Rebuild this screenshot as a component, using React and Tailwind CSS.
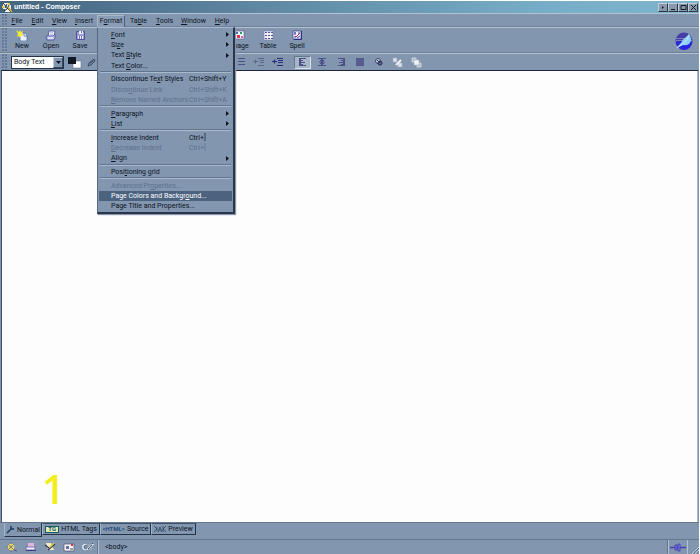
import React from 'react';

const MENUS = [
  { label: 'File', key: 0, width: 'w-[20px]' },
  { label: 'Edit', key: 0, width: 'w-[21px]' },
  { label: 'View', key: 0, width: 'w-[23px]' },
  { label: 'Insert', key: 0, width: 'w-[26px]' },
  { label: 'Format', key: 1, width: 'w-[28px]', open: true },
  { label: 'Table', key: 2, width: 'w-[27px]' },
  { label: 'Tools', key: 0, width: 'w-[25px]' },
  { label: 'Window', key: 0, width: 'w-[33px]' },
  { label: 'Help', key: 0, width: 'w-[24px]' },
];

const FORMAT_ITEMS = [
  { label: 'Font', key: 0, sub: true },
  { label: 'Size', key: 2, sub: true },
  { label: 'Text Style', key: 5, sub: true },
  { label: 'Text Color...', key: 5 },
  null,
  { label: 'Discontinue Text Styles', key: 14, hint: 'Ctrl+Shift+Y' },
  { label: 'Discontinue Link', key: 5, hint: 'Ctrl+Shift+K', off: true },
  { label: 'Remove Named Anchors', key: 0, hint: 'Ctrl+Shift+A', off: true },
  null,
  { label: 'Paragraph', key: 0, sub: true },
  { label: 'List', key: 0, sub: true },
  null,
  { label: 'Increase Indent', key: 0, hint: 'Ctrl+]' },
  { label: 'Decrease Indent', key: 0, hint: 'Ctrl+[', off: true },
  { label: 'Align', key: 0, sub: true },
  null,
  { label: 'Positioning grid', key: 4 },
  null,
  { label: 'Advanced Properties...', key: 11, off: true },
  { label: 'Page Colors and Background...', key: 22, active: true },
  { label: 'Page Title and Properties...' },
];

function Label({ text, at }) {
  if (at === undefined) return <span>{text}</span>;
  return (
    <span>
      {text.slice(0, at)}
      <u className="underline-offset-1">{text[at]}</u>
      {text.slice(at + 1)}
    </span>
  );
}

function Svg({ w, h, className = '', children }) {
  return (
    <svg width={w} height={h} viewBox={`0 0 ${w} ${h}`} className={`block shrink-0 ${className}`} aria-hidden="true">
      {children}
    </svg>
  );
}

function Grip() {
  return (
    <div className="w-[5px] shrink-0 self-stretch bg-[radial-gradient(circle_at_1px_1px,#64789a_0.7px,transparent_1px)] bg-[length:3px_3px]" />
  );
}

function FormatMenu() {
  return (
    <div
      role="menu"
      className="absolute top-full left-0 z-10 flex h-[187px] w-[138px] flex-col justify-between border border-r-2 border-b-2 border-[#26364c] border-t-[#a9b9cb] border-l-[#56697f] bg-[#8296b0] px-px pt-[2px] shadow-[1px_1px_1px_#8a96a6]"
    >
      {FORMAT_ITEMS.map((item, i) =>
        item === null ? (
          <hr key={i} className="mx-px h-[3px] shrink-0 border-0 border-t border-[#61758e] bg-[linear-gradient(#a9bacd_1px,transparent_1px)]" />
        ) : (
          <button
            key={i}
            type="button"
            role="menuitem"
            disabled={item.off}
            className={`grid h-[10px] shrink-0 grid-cols-[78px_1fr] items-center pl-3 text-left leading-[10px] whitespace-nowrap ${
              item.active ? 'bg-[#4c637f] text-white' : item.off ? 'text-[#5d708b]' : 'text-[#0c1422]'
            }`}
          >
            <Label text={item.label} at={item.key} />
            <span className="flex items-center justify-between pr-[3px]">
              <span>{item.hint}</span>
              {item.sub && (
                <Svg w={3} h={5}>
                  <path d="M0 0L3 2.5L0 5Z" fill="#0c1422" />
                </Svg>
              )}
            </span>
          </button>
        ),
      )}
    </div>
  );
}

const AppIcon = () => (
  <Svg w={11} h={11}>
    <path d="M1 1h5v2h3v7H3V7H1z" fill="#edf3f4" />
    <path d="M1 1l8 9M3 6l2-4M7 3l-2 4M2 9l3-2" stroke="#1b2831" />
    <path d="M6 1h2v2H6zM0 4h2v2H0z" fill="#e8c83e" />
    <path d="M6 5l4 5" stroke="#d8ae36" strokeWidth="1.5" />
  </Svg>
);

const NewIcon = () => (
  <Svg w={12} h={11}>
    <path d="M4 3h5l2 2v6H4z" fill="#e9f0ff" stroke="#4c5ca4" strokeWidth=".7" />
    <path d="M8 3v3h3" fill="none" stroke="#4c5ca4" strokeWidth=".7" />
    <path d="M0 0l3 2 1-2 1 2 2-1-1 3 2 1-3 1-1 2-1-2-2 1 1-3z" fill="#f0ed36" />
  </Svg>
);

const OpenIcon = () => (
  <Svg w={12} h={11}>
    <path d="M4 1h6l-1 6H3z" fill="#f1f3ff" stroke="#4b4e9b" strokeWidth=".8" />
    <path d="M5 3h3M5 5h3" stroke="#8b90c8" strokeWidth=".7" />
    <path d="M1 6h7l2-2v4l-1 2H2z" fill="#b9c0ea" stroke="#4b4e9b" strokeWidth=".8" />
    <path d="M3 8h5" stroke="#fff" />
  </Svg>
);

const SaveIcon = () => (
  <Svg w={11} h={11}>
    <path d="M1.5 1.5h8v8h-8z" fill="#9b9bd6" stroke="#55519c" />
    <path d="M4 1h4v3H4zM3 6h5v3H3z" fill="#eef0ff" />
    <path d="M6.5 1v2M4.500 6v3M6.500 6v3" fill="none" stroke="#55519c" strokeWidth=".8" />
  </Svg>
);

const ImageIcon = () => (
  <Svg w={11} h={11}>
    <path d="M1 1h9v8H1z" fill="#fff" stroke="#625993" strokeWidth=".7" />
    <path d="M2 2h2v2H2z" fill="#2f6ac7" />
    <path d="M6 2h2v2H6z" fill="#1aa35d" />
    <path d="M3 5h3v3H3z" fill="#dc3657" />
    <path d="M7 6h2v2H7z" fill="#dd59bb" />
  </Svg>
);

const TableIcon = () => (
  <Svg w={11} h={11}>
    <path d="M1 1h9v9H1z" fill="#eff1ff" stroke="#7e82b2" strokeWidth=".7" />
    <path d="M2 2.500h8M2 5.500h8M2 8.500h8" stroke="#56538e" strokeDasharray="2 1" />
  </Svg>
);

const SpellIcon = () => (
  <Svg w={11} h={11}>
    <path d="M1 1h8v8H1z" fill="#eef0ff" stroke="#38367c" strokeWidth=".7" />
    <path d="M2 3h2M3 2v3M6 3h2M2 7h2" stroke="#4548a6" />
    <path d="M3 6l1 1 4-4" fill="none" stroke="#a72952" />
    <path d="M5 8l3-2" stroke="#4548a6" />
    <path d="M9.5 1v8.5H2" fill="none" stroke="#2d2d80" />
  </Svg>
);

function Tool({ label, icon }) {
  return (
    <button type="button" className="flex w-7 flex-col items-center leading-[10px]">
      {icon}
      <span>{label}</span>
    </button>
  );
}

const Seabird = () => (
  <Svg w={18} h={18}>
    <circle cx="9" cy="9" r="8.5" fill="#453ea6" />
    <path d="M1 10q8-2 16 0a8 8 0 0 1-16 0" fill="#2924e0" />
    <path d="M1 6.500h16M1 8.500h16" stroke="#8d8bd0" strokeWidth=".8" />
    <path d="M14 2q4 6 0 10-3 2-6 1l-4 2-3 1 5-5q2-4 5-6z" fill="#8dd0f7" />
    <path d="M14 3q-1 5-5 8l-7 5" fill="none" stroke="#c9ecff" strokeWidth=".8" />
  </Svg>
);

function TitleButton({ name, children }) {
  return (
    <button
      type="button"
      aria-label={name}
      className="flex h-[9px] w-[10px] items-center justify-center border border-[#283747] border-t-[#c1ceda] border-l-[#c1ceda] bg-[#8799aa]"
    >
      <Svg w={7} h={7}>{children}</Svg>
    </button>
  );
}

function Lines({ d, color = '#4e5188' }) {
  return (
    <Svg w={10} h={10}>
      <path d={d} fill="none" stroke={color} />
    </Svg>
  );
}

function FormatButton({ name, on, children }) {
  return (
    <button
      type="button"
      aria-label={name}
      className={`flex h-[13px] w-[17px] items-center justify-center ${on ? 'border border-[#d7e0e8] border-t-[#64788e] border-l-[#64788e] bg-[#a7b7c7]' : ''}`}
    >
      {children}
    </button>
  );
}

function Tab({ label, icon, on, width }) {
  return (
    <button
      type="button"
      role="tab"
      aria-selected={!!on}
      className={`flex items-center justify-center gap-[2px] border border-[#233348] border-l-[#a5b6c8] leading-[10px] whitespace-nowrap ${width} ${
        on ? 'h-[14px] border-t-0' : 'h-3 border-t-[#40536c]'
      }`}
    >
      {icon}
      <span>{label}</span>
    </button>
  );
}

function StatusButton({ name, children }) {
  return (
    <button type="button" aria-label={name} className="flex w-[19px] justify-center">
      <Svg w={12} h={10}>{children}</Svg>
    </button>
  );
}

export default function App() {
  return (
    <div className="flex h-screen flex-col border-t border-r border-white bg-[#8296b0] font-[Roboto,'Liberation_Sans',sans-serif] text-[7px] text-[#0c1422] select-none">
      <header className="flex h-3 shrink-0 items-center gap-px bg-[linear-gradient(90deg,#446580,#608aa5_40%,#77adc8_78%,#7eb4cc)] pr-px pl-[2px]">
        <AppIcon />
        <h1 className="flex-1 font-['Liberation_Sans',sans-serif] text-[7px] leading-3 font-bold text-white">untitled - Composer</h1>
        <div className="flex">
          <TitleButton name="Pin"><path d="M2 2l2 1.500L2 5z" fill="#101a24" /></TitleButton>
          <TitleButton name="Minimize"><path d="M1 5.500h4" stroke="#101a24" /></TitleButton>
          <TitleButton name="Maximize"><path d="M1 1.500h5v4H1z" fill="none" stroke="#101a24" /></TitleButton>
          <TitleButton name="Close"><path d="M1 1l5 5M6 1L1 6" stroke="#101a24" /></TitleButton>
        </div>
      </header>

      <nav className="flex h-[14px] shrink-0 items-center border-t border-[#b4c3d1] pl-[2px]" aria-label="Menu bar">
        <Grip />
        {MENUS.map((m) => (
          <div key={m.label} className={`relative ${m.width}`}>
            <button
              type="button"
              className={`flex h-[12px] w-full items-center justify-center leading-[10px] ${
                m.open ? 'border border-b-0 border-[#a9b9cb] border-r-[#4d6078] bg-[#8a9db6]' : ''
              }`}
            >
              <Label text={m.label} at={m.key} />
            </button>
            {m.open && <FormatMenu />}
          </div>
        ))}
      </nav>

      <div className="flex h-[26px] shrink-0 items-center border-t border-[#b4c3d1] pr-[6px] pl-[2px] shadow-[0_-1px_0_#6c8098]" role="toolbar" aria-label="Composition">
        <Grip />
        <div className="flex gap-px pl-px">
          <Tool label="New" icon={<NewIcon />} />
          <Tool label="Open" icon={<OpenIcon />} />
          <Tool label="Save" icon={<SaveIcon />} />
        </div>
        <div className="flex gap-px pl-[131px]">
          <Tool label="Image" icon={<ImageIcon />} />
          <Tool label="Table" icon={<TableIcon />} />
          <Tool label="Spell" icon={<SpellIcon />} />
        </div>
        <div className="flex-1" />
        <Seabird />
      </div>

      <div className="flex h-[17px] shrink-0 items-center border-t border-[#b4c3d1] pl-[2px] shadow-[0_-1px_0_#6c8098]" role="toolbar" aria-label="Formatting">
        <Grip />
        <div className="relative ml-1 h-[13px] w-[53px]">
          <select
            aria-label="Paragraph format"
            className="block h-full w-full appearance-none border border-[#253449] bg-white pl-[2px] text-[7px] leading-[11px] text-[#0c1422]"
          >
            <option>Body Text</option>
          </select>
          <span className="pointer-events-none absolute top-px right-px flex h-[11px] w-[10px] items-center justify-center border border-[#34465d] border-t-[#c4d0dd] border-l-[#c4d0dd] bg-[#8296b0]">
            <Svg w={5} h={3}><path d="M0 0h5L2.500 3z" fill="#0c1422" /></Svg>
          </span>
        </div>
        <button type="button" aria-label="Text and background color" className="ml-1">
          <Svg w={14} h={13}>
            <path d="M5 5h8v7H5z" fill="#fff" stroke="#637790" strokeWidth=".6" />
            <path d="M0 1h8v7H0z" fill="#111821" />
          </Svg>
        </button>
        <button type="button" aria-label="Highlight" className="ml-[5px]">
          <Svg w={10} h={10}><path d="M1 9l1-3 5-4 1 2-4 4zM3 6l3-2" fill="#70829b" stroke="#344763" strokeWidth=".9" /></Svg>
        </button>
        <div className="ml-[134px] flex items-center gap-[2px]">
          <FormatButton name="Numbered list"><Lines d="M3 1.500h7M3 4.500h7M3 7.500h7M0 1.500h1M0 4.500h1M0 7.500h1" /></FormatButton>
          <FormatButton name="Decrease indent">
            <Svg w={11} h={10}><path d="M5 1.500h6M7 3.500h4M7 5.500h4M5 8.500h6M0 4.500h5M2.500 2.500v4" fill="none" stroke="#5c6888" /></Svg>
          </FormatButton>
          <FormatButton name="Increase indent">
            <Svg w={11} h={10}><path d="M5 1.500h6M6 3.500h5M6 5.500h5M5 8.500h6M0 4.500h5M2.500 2.500v4" fill="none" stroke="#282d78" strokeWidth="1.200" /></Svg>
          </FormatButton>
        </div>
        <div className="ml-2 flex items-center gap-[2px]">
          <FormatButton name="Align left" on><Lines d="M1 1.500h7M1 3.500h4M1 5.500h6M1 7.500h4M1 8.500h7M1.500 1v8M2.500 1v8" /></FormatButton>
          <FormatButton name="Align center"><Lines d="M1 1.500h8M3 3.500h4M2 5h6M3 6.500h4M1 8.500h8M4.500 1v8M5.500 1v8" /></FormatButton>
          <FormatButton name="Align right"><Lines d="M2 1.500h7M5 3.500h4M3 5.500h6M5 7.500h4M2 8.500h7M8.500 1v8M7.500 1v8" /></FormatButton>
          <FormatButton name="Justify">
            <Svg w={10} h={10}>
              <path d="M1 1h8v8H1z" fill="#555a8e" />
              <path d="M1 3h8M1 5h8M1 7h8" stroke="#626b98" strokeWidth=".5" />
            </Svg>
          </FormatButton>
          <FormatButton name="Link">
            <Svg w={10} h={10}>
              <circle cx="4" cy="4" r="2.500" fill="#c8d2dd" stroke="#3f456e" />
              <circle cx="6" cy="6" r="2" fill="#5d698f" stroke="#252b50" />
              <path d="M3 3l3 3" stroke="#252b50" />
            </Svg>
          </FormatButton>
          <FormatButton name="Bring forward">
            <Svg w={11} h={11}>
              <path d="M1 1h4v4H1zM6 6h4v4H6z" fill="#dce0e7" stroke="#a7b0bf" strokeWidth=".6" />
              <path d="M4 8l5-5" stroke="#eef2f4" strokeWidth="2" />
            </Svg>
          </FormatButton>
          <FormatButton name="Send back">
            <Svg w={11} h={11}>
              <path d="M1 1h4v4H1zM6 6h4v4H6z" fill="#b4bfcd" stroke="#d7dce3" strokeWidth=".8" />
              <path d="M3 3h5v5H3z" fill="#f0f2f4" stroke="#adb7c4" strokeWidth=".6" />
            </Svg>
          </FormatButton>
        </div>
      </div>

      <main className="mr-px ml-px flex min-h-0 flex-1 items-end border-t border-l border-t-[#1d2435] border-l-[#40506a] bg-[#fdfdfd] pl-10 shadow-[inset_-1px_0_0_#a9b9ca]">
        <p className="pb-2 font-['Open_Sans',sans-serif] text-[40px] leading-[50px] font-semibold text-[#f3ed20]">1</p>
      </main>

      <div className="flex h-[17px] shrink-0 items-start border-t border-[#63778f] pl-1" role="tablist" aria-label="Edit mode">
        <Tab
          label="Normal" on width="w-[38px]"
          icon={<Svg w={9} h={9}><path d="M1 8l5-5M5 1v3h3" fill="none" stroke="#193d67" strokeWidth="1.500" /></Svg>}
        />
        <Tab
          label="HTML Tags" width="w-[58px]"
          icon={
            <span className="flex h-[7px] w-[14px] items-center justify-center border border-[#145b66] bg-[#e8edb7] text-[6px] leading-[6px] font-bold text-[#145b66]">TG</span>
          }
        />
        <Tab label="Source" width="w-[51px]" icon={<span className="text-[6px] font-medium text-[#173f70]">&lt;HTML&gt;</span>} />
        <Tab
          label="Preview" width="w-[45px]"
          icon={<Svg w={12} h={8}><path d="M0 1l3 3-3 3M3 2v4M4 7l2-5 2 5M5 5h2M12 1L9 4l3 3M9 1v6" fill="none" stroke="#2d4764" strokeWidth=".8" /></Svg>}
        />
      </div>

      <footer className="flex h-[15px] shrink-0 items-center border-t border-[#63778f] pl-[2px]">
        <div className="flex">
          <StatusButton name="Navigator">
            <circle cx="5" cy="5" r="3" fill="#d4c58c" stroke="#f0dd62" />
            <path d="M5 0v2M5 8v2M0 5h2M2 2l6 6M8 2L2 8" stroke="#6a654d" strokeWidth=".7" />
            <path d="M8 8l3 1" stroke="#4d4e74" />
          </StatusButton>
          <StatusButton name="Mail">
            <path d="M3 1h6v5H3z" fill="#e4b5da" />
            <path d="M1 5h9v3H1z" fill="#eee9f5" stroke="#5758a0" strokeWidth=".7" />
            <path d="M1 8.500h10" stroke="#3a3b83" />
          </StatusButton>
          <StatusButton name="Composer">
            <path d="M2 1h5l3 7H4z" fill="#f5edc5" />
            <path d="M11 2L4 8M1 3l4 3" stroke="#33353c" strokeWidth="1.200" />
            <path d="M10 1L6 5" stroke="#e6cd40" strokeWidth="1.500" />
          </StatusButton>
          <StatusButton name="Address book">
            <path d="M1 2h10v7H1z" fill="#f5f2ef" stroke="#4d557a" strokeWidth=".7" />
            <path d="M3 4h3v3H3z" fill="#686eaa" />
            <path d="M8 2h2v2H8z" fill="#c83c54" />
            <path d="M7 7h3" stroke="#42476b" />
          </StatusButton>
          <StatusButton name="Chat">
            <path d="M5 3q-4-1-4 2t4 2M6 3h4L6 7h4" fill="none" stroke="#e6ecf2" strokeWidth="1.800" />
            <path d="M5 3q-3 0-3 2t3 2M6 3h4L6 7h4M10 1l1 1" fill="none" stroke="#303f5b" strokeWidth=".8" />
          </StatusButton>
        </div>
        <div className="ml-px flex h-full flex-1 items-center border-l border-[#b2c1d1] pl-[6px] shadow-[-1px_0_0_#63778f]">&lt;body&gt;</div>
        <div className="flex h-full w-[20px] items-center justify-center border-r border-l border-[#b2c1d1] shadow-[-1px_0_0_#63778f]">
          <Svg w={16} h={9}>
            <path d="M0 4.500h16" stroke="#4440b4" strokeWidth="1.500" />
            <path d="M5 2h2v5H5zM8 1h2v7H8z" fill="#8380ea" stroke="#3a36a7" strokeWidth=".8" />
          </Svg>
        </div>
        <Svg w={11} h={14} className="self-end">
          <path d="M4 14l7-7M7 14l4-4" stroke="#c1ceda" />
          <path d="M5 14l6-6M8 14l3-3" stroke="#52657d" strokeWidth=".7" />
        </Svg>
      </footer>
    </div>
  );
}
